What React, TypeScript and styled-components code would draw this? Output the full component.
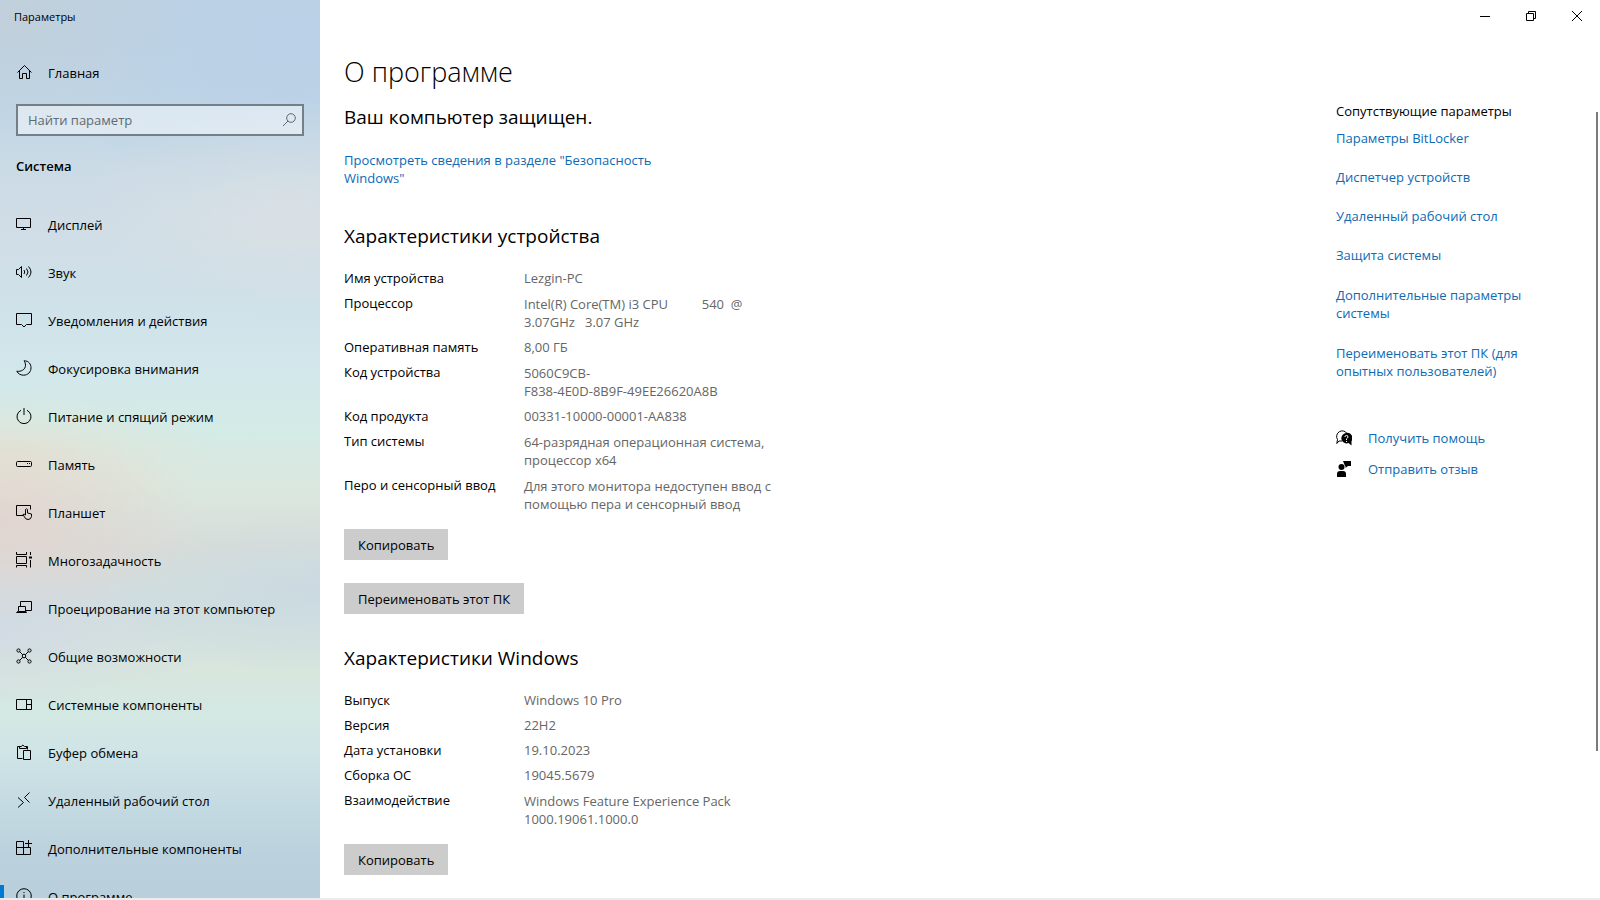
import React from "react";
import styled, { createGlobalStyle } from "styled-components";

const GlobalStyle = createGlobalStyle`
  * { box-sizing: border-box; }
  html, body { margin: 0; padding: 0; }
  body {
    background: #ffffff;
    color: #000000;
    font-family: "Open Sans", "Noto Sans", sans-serif;
    font-size: 13px;
    line-height: 18px;
    overflow: hidden;
  }
  button, input { font: inherit; color: inherit; }
  h1, h2, h3, p, dl, dd, dt, ul { margin: 0; padding: 0; font-size: inherit; font-weight: 400; }
`;

const Window = styled.div`
  display: flex;
  height: 100vh;
  overflow: hidden;
  border-bottom: 2px solid #e9eded;
`;

const Sidebar = styled.aside`
  flex: 0 0 320px;
  overflow: hidden;
  background:
    radial-gradient(ellipse 200px 100px at 0% 58%, rgba(228, 208, 204, 0.75), rgba(228, 208, 204, 0)),
    radial-gradient(ellipse 220px 70px at 0% 51%, rgba(232, 226, 208, 0.7), rgba(232, 226, 208, 0)),
    radial-gradient(ellipse 240px 80px at 100% 66%, rgba(200, 217, 226, 0.8), rgba(200, 217, 226, 0)),
    radial-gradient(ellipse 220px 80px at 0% 70%, rgba(209, 217, 229, 0.8), rgba(209, 217, 229, 0)),
    radial-gradient(ellipse 200px 110px at 90% 23%, rgba(221, 226, 227, 0.7), rgba(221, 226, 227, 0)),
    radial-gradient(ellipse 240px 170px at 90% 6%, rgba(184, 208, 232, 0.8), rgba(184, 208, 232, 0)),
    radial-gradient(ellipse 220px 120px at 0% 2%, rgba(193, 207, 217, 0.8), rgba(193, 207, 217, 0)),
    linear-gradient(
      180deg,
      #bdd2e3 0%,
      #c0d5e5 12%,
      #cbdbe6 19%,
      #d0dde6 25%,
      #cfe1e9 34%,
      #d2e7eb 41%,
      #d3ebe7 47%,
      #dae8df 54%,
      #d8ddd9 61%,
      #d2dfde 67%,
      #d8e6dd 75%,
      #d4e8e3 79%,
      #cfe4e6 84%,
      #c4dae2 90%,
      #bbd1dd 95%,
      #b9cfdb 100%
    );
`;

const AppTitle = styled.div`
  height: 32px;
  padding: 8px 14px;
  font-size: 11px;
`;

const NavLink = styled.a`
  display: flex;
  align-items: center;
  gap: 16px;
  height: 48px;
  padding-right: 12px;
  color: inherit;
  text-decoration: none;
  white-space: nowrap;
  svg { margin: 0 0 2px -4px; }
`;

const Marker = styled.span<{ $on?: boolean }>`
  width: 4px;
  height: 24px;
  background: ${(p) => (p.$on ? "#0078d7" : "transparent")};
`;

const HomeArea = styled.div`
  padding-top: 17px;
`;

const SearchBox = styled.label`
  display: flex;
  align-items: center;
  height: 32px;
  margin: 7px 16px 0;
  padding: 0 5px 0 10px;
  border: 2px solid #747f88;
  background: rgba(255, 255, 255, 0.45);
  color: #5c6870;
`;

const SearchInput = styled.input`
  flex: 1;
  min-width: 0;
  padding: 0 0 1px;
  border: 0;
  outline: 0;
  background: transparent;
  &::placeholder { color: #5f6a71; opacity: 1; }
`;

const SectionTitle = styled.h2`
  padding: 21px 16px 26px;
  font-weight: 600;
`;

const NavList = styled.nav`
  display: flex;
  flex-direction: column;
`;

const Icon = styled.svg`
  flex: none;
  width: 16px;
  height: 16px;
  fill: none;
  stroke: currentColor;
  stroke-width: 1;
`;

const Main = styled.main`
  flex: 1;
  min-width: 0;
  display: flex;
  flex-direction: column;
`;

const Caption = styled.header`
  flex: none;
  display: flex;
  justify-content: flex-end;
  height: 32px;
`;

const CaptionButton = styled.button`
  display: grid;
  place-items: center;
  width: 46px;
  height: 32px;
  padding: 0;
  border: 0;
  background: transparent;
  svg { width: 10px; height: 10px; }
`;

const Body = styled.div`
  flex: 1;
  min-height: 0;
  display: flex;
`;

const About = styled.section`
  flex: 1;
  min-width: 0;
  padding: 22px 24px 0;
`;

const PageTitle = styled.h1`
  font-size: 27px;
  line-height: 36px;
  font-weight: 300;
`;

const Heading = styled.h2`
  font-size: 19px;
  line-height: 28px;
`;

const Status = styled(Heading)`
  margin-top: 13px;
`;

const Link = styled.a`
  color: #0d6ab4;
  text-decoration: none;
  white-space: pre-line;
`;

const SecurityLink = styled.p`
  margin: 20px 0 35px;
`;

const Specs = styled.dl`
  display: flex;
  flex-direction: column;
  gap: 7px;
  margin: 19px 0 16px;
`;

const Spec = styled.div<{ $tall: boolean }>`
  display: grid;
  grid-template-columns: 180px minmax(0, 1fr);
  dd {
    padding-top: ${(p) => (p.$tall ? "1px" : "0")};
    color: #666666;
    white-space: pre-wrap;
  }
`;

const Action = styled.button`
  display: block;
  height: 31px;
  margin-bottom: 23px;
  padding: 0 14px;
  border: 0;
  background: #cccccc;
`;

const WindowsHeading = styled(Heading)`
  margin-top: 30px;
`;

const Related = styled.aside`
  flex: 0 0 260px;
  padding-top: 70px;
`;

const RelatedList = styled.ul`
  display: flex;
  flex-direction: column;
  gap: 21px;
  margin-top: 9px;
  list-style: none;
`;

const RelatedItem = styled.li<{ $tall: boolean }>`
  padding-top: ${(p) => (p.$tall ? "1px" : "0")};
`;

const Help = styled.ul`
  display: flex;
  flex-direction: column;
  gap: 13px;
  margin-top: 49px;
  list-style: none;
  li { display: flex; align-items: center; gap: 16px; }
`;

const ScrollTrack = styled.div`
  flex: 0 0 4px;
  padding: 80px 0 147px;
`;

const ScrollThumb = styled.div`
  width: 2px;
  height: 100%;
  background: #7a7a7a;
`;

const icons: Record<string, React.ReactNode> = {
  home: <path d="M1.500 8.500 8.500 1.500l7 7M3.500 7v7.500h3v-5h4v5h3V7" />,
  display: <path d="M.5 2.500h14v9H.5zM7.500 11.500v2M5 13.500h5" />,
  sound: <path d="M.5 5.500h2L5.500 2.500v11L2.500 10.500H.5zM8 6q1.500 2 0 4M10.500 4.500q3 3.500 0 7M12.500 2.500q5 5.500 0 11" />,
  chat: <path d="M.5 1.500h15v11h-5L8 15l-2.500-2.500h-5z" />,
  moon: <path d="M8 .8c5 0 7 3.500 7 7 0 4-3 7.400-7.500 7.400-3 0-5.500-1.500-6.700-4 4 .8 8.700-1.500 8.700-6C9.500 3.500 9 2 8 .8z" />,
  power: <path d="M5 2.300a7 7 0 1 0 6 0M8 0v7" />,
  storage: <><rect x=".5" y="5.500" width="15" height="5" rx="1" /><path d="M11 7.500h1M13 7.500h1" /></>,
  tablet: <path d="M7 11.500H.5v-10h14v4M9.500 11V5.500q1-1.500 2 0v3.500l4 1v2.500q-.5 3-3.500 3-2.500 0-3.500-2.500L7 10.500q1-1 2.500.5z" />,
  tasks: <><path d="M.5 0v2.500h10V0M.5 4.500h10v7H.5zM.5 15.500v-2h10v2M14.500 0v3M14.500 8v7.500" /><path d="M13 4.500h3v2h-3z" fill="currentColor" stroke="none" /></>,
  project: <path d="M4.500 6.500v-5h11v9h-6M2.500 6.500h7v5h-7zM2.500 11 .5 12.500h10L9.500 11" />,
  shared: <><circle cx="2.500" cy="2.500" r="1.600" /><circle cx="13.500" cy="2.500" r="1.600" /><circle cx="2.500" cy="13.500" r="1.600" /><circle cx="13.500" cy="13.500" r="1.600" /><circle cx="8" cy="8" r="1.800" /><path d="M3.600 3.600 6.700 6.700M12.400 3.600 9.300 6.700M3.600 12.400l3.100-3.100M12.400 12.400 9.300 9.300" /></>,
  components: <path d="M.5 3.500h15v10H.5zM10.500 3.500v10M10.500 8.500h5" />,
  clipboard: <path d="M6.500 14.500h-5v-12h3M9.500 2.500h2v3M3.500 4.500v-2h2q1-3 3 0h2v2zM7.500 6.500h7v9h-7z" />,
  remote: <path d="M2 5.500 7.500 10.500 2 15.500M13.500.5 8.500 5.500l5 5" />,
  optional: <path d="M7.500 1.500h-7v13h14v-7H.5M7.500 1.500v13M12.500 0v7M9 3.500h7" />,
  info: <><circle cx="8" cy="8" r="7.300" /><path d="M8 6.500v5M8 4v1" /></>,
};

const Glyph = ({ name }: { name: string }) => (
  <Icon viewBox="0 0 16 16" aria-hidden="true">{icons[name]}</Icon>
);

const navItems: [string, string][] = [
  ["display", "Дисплей"],
  ["sound", "Звук"],
  ["chat", "Уведомления и действия"],
  ["moon", "Фокусировка внимания"],
  ["power", "Питание и спящий режим"],
  ["storage", "Память"],
  ["tablet", "Планшет"],
  ["tasks", "Многозадачность"],
  ["project", "Проецирование на этот компьютер"],
  ["shared", "Общие возможности"],
  ["components", "Системные компоненты"],
  ["clipboard", "Буфер обмена"],
  ["remote", "Удаленный рабочий стол"],
  ["optional", "Дополнительные компоненты"],
  ["info", "О программе"],
];

const deviceSpecs: [string, string][] = [
  ["Имя устройства", "Lezgin-PC"],
  ["Процессор", "Intel(R) Core(TM) i3 CPU          540  @\n3.07GHz   3.07 GHz"],
  ["Оперативная память", "8,00 ГБ"],
  ["Код устройства", "5060C9CB-\nF838-4E0D-8B9F-49EE26620A8B"],
  ["Код продукта", "00331-10000-00001-AA838"],
  ["Тип системы", "64-разрядная операционная система,\nпроцессор x64"],
  ["Перо и сенсорный ввод", "Для этого монитора недоступен ввод с\nпомощью пера и сенсорный ввод"],
];

const windowsSpecs: [string, string][] = [
  ["Выпуск", "Windows 10 Pro"],
  ["Версия", "22H2"],
  ["Дата установки", "19.10.2023"],
  ["Сборка ОС", "19045.5679"],
  ["Взаимодействие", "Windows Feature Experience Pack\n1000.19061.1000.0"],
];

const relatedLinks = [
  "Параметры BitLocker",
  "Диспетчер устройств",
  "Удаленный рабочий стол",
  "Защита системы",
  "Дополнительные параметры\nсистемы",
  "Переименовать этот ПК (для\nопытных пользователей)",
];

const SpecList = ({ items }: { items: [string, string][] }) => (
  <Specs>
    {items.map(([label, value]) => (
      <Spec key={label} $tall={value.includes("\n")}>
        <dt>{label}</dt>
        <dd>{value}</dd>
      </Spec>
    ))}
  </Specs>
);

export default function App() {
  return (
    <>
      <GlobalStyle />
      <Window>
        <Sidebar>
          <AppTitle>Параметры</AppTitle>
          <HomeArea>
            <NavLink href="#home"><Marker /><Glyph name="home" />Главная</NavLink>
          </HomeArea>
          <SearchBox>
            <SearchInput type="text" placeholder="Найти параметр" aria-label="Найти параметр" />
            <Icon viewBox="0 0 16 16" aria-hidden="true">
              <circle cx="10" cy="6" r="4.300" />
              <path d="M7 9 2 14" />
            </Icon>
          </SearchBox>
          <SectionTitle>Система</SectionTitle>
          <NavList>
            {navItems.map(([icon, label]) => (
              <NavLink key={icon} href={`#${icon}`}>
                <Marker $on={icon === "info"} />
                <Glyph name={icon} />
                {label}
              </NavLink>
            ))}
          </NavList>
        </Sidebar>
        <Main>
          <Caption>
            <CaptionButton aria-label="Свернуть">
              <Icon viewBox="0 0 10 10"><path d="M0 5.500h10" /></Icon>
            </CaptionButton>
            <CaptionButton aria-label="Восстановить">
              <Icon viewBox="0 0 10 10"><path d="M.5 2.500h7v7h-7zM2.500 2.500v-2h7v7h-2" /></Icon>
            </CaptionButton>
            <CaptionButton aria-label="Закрыть">
              <Icon viewBox="0 0 10 10"><path d="M0 0l10 10M10 0 0 10" /></Icon>
            </CaptionButton>
          </Caption>
          <Body>
            <About>
              <PageTitle>О программе</PageTitle>
              <Status>Ваш компьютер защищен.</Status>
              <SecurityLink>
                <Link href="#security">{'Просмотреть сведения в разделе "Безопасность\nWindows"'}</Link>
              </SecurityLink>
              <Heading>Характеристики устройства</Heading>
              <SpecList items={deviceSpecs} />
              <Action>Копировать</Action>
              <Action>Переименовать этот ПК</Action>
              <WindowsHeading>Характеристики Windows</WindowsHeading>
              <SpecList items={windowsSpecs} />
              <Action>Копировать</Action>
            </About>
            <Related>
              <h3>Сопутствующие параметры</h3>
              <RelatedList>
                {relatedLinks.map((text) => (
                  <RelatedItem key={text} $tall={text.includes("\n")}>
                    <Link href="#related">{text}</Link>
                  </RelatedItem>
                ))}
              </RelatedList>
              <Help>
                <li>
                  <Icon viewBox="0 0 16 16" aria-hidden="true">
                    <path d="M6 11H3L.8 13.500 1.500 9.500A5.300 5.300 0 1 1 11 3.500" />
                    <path d="M10 3a5.200 5.200 0 1 0 2.500 10L15.500 15.500V11A5.200 5.200 0 0 0 10 3z" fill="currentColor" stroke="none" />
                    <path d="M8.800 7q.2-1.500 1.700-1.500T12 7q0 .8-1.500 1.800V10M10.500 11v1" stroke="#fff" />
                  </Icon>
                  <Link href="#help">Получить помощь</Link>
                </li>
                <li>
                  <Icon viewBox="0 0 16 16" aria-hidden="true">
                    <g fill="currentColor" stroke="none">
                      <circle cx="5.500" cy="6" r="3" />
                      <path d="M1 16v-3q0-3 3-3h3q3 0 3 3v3zM7 0h8v5h-3l-2.500 2V5H9z" />
                    </g>
                  </Icon>
                  <Link href="#feedback">Отправить отзыв</Link>
                </li>
              </Help>
            </Related>
            <ScrollTrack><ScrollThumb /></ScrollTrack>
          </Body>
        </Main>
      </Window>
    </>
  );
}
